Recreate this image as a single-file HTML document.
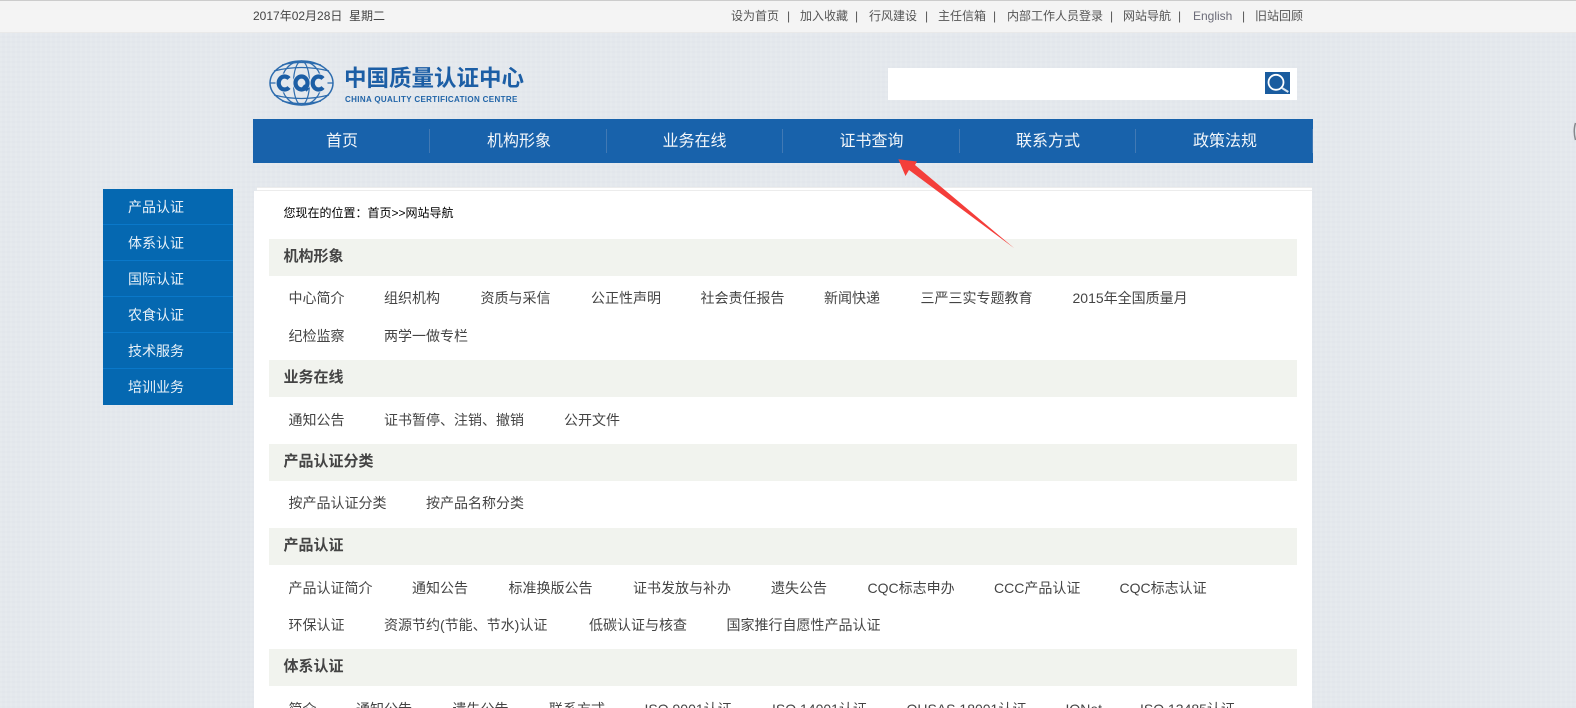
<!DOCTYPE html>
<html lang="zh">
<head>
<meta charset="utf-8">
<style>
html,body{margin:0;padding:0;width:1576px;height:708px;overflow:hidden}
body{position:relative;background:#e4e8ed;font-family:"Liberation Sans","WenQuanYi Zen Hei","Noto Sans CJK SC",sans-serif;color:#444}
#w{position:absolute;left:0;top:0;width:1576px;height:708px;overflow:hidden}
.a{position:absolute;white-space:nowrap}
.tex{position:absolute;left:0;top:0;width:1576px;height:708px;background-image:repeating-linear-gradient(90deg,rgba(255,255,255,.08) 0 2px,rgba(255,255,255,0) 2px 5px),repeating-linear-gradient(0deg,rgba(200,206,214,.07) 0 2px,rgba(255,255,255,0) 2px 5px)}
.top{left:0;top:0;width:1576px;height:31px;background:#f4f4f4;border-top:1px solid #ccc;border-bottom:1px solid #e9e9e9;box-sizing:content-box}
.t{font-size:12px;line-height:14px;top:9px;color:#555}
.nav{left:253px;top:119px;width:1060px;height:44px;background:#1862ab}
.n{top:120px;height:44px;line-height:44px;font-size:16px;color:#f2f6fa;text-align:center;width:120px}
.sep{top:129px;width:1px;height:24px;background:#4179b4}
.side{left:103px;top:189px;width:130px;height:216px;background:#0568b1}
.s{left:128px;font-size:14px;line-height:20px;color:#e8f1f8}
.l{left:103px;width:130px;height:1px;background:#0a78c9}
.bar{left:269px;width:1028px;background:#f1f3ee}
.h{left:283.500px;font-size:15px;line-height:18px;font-weight:bold;color:#444}
.i{font-size:14px;line-height:18px;color:#444}
</style>
</head>
<body>
<div id="w">
<div class="tex"></div>
<div class="a top"></div>
<div class="a t" style="left:253px;color:#444">2017年02月28日&nbsp; 星期二</div>
<div class="a t" style="left:731px">设为首页</div><div class="a t" style="left:787px">|</div>
<div class="a t" style="left:800px">加入收藏</div><div class="a t" style="left:855px">|</div>
<div class="a t" style="left:869px">行风建设</div><div class="a t" style="left:925px">|</div>
<div class="a t" style="left:938px">主任信箱</div><div class="a t" style="left:993px">|</div>
<div class="a t" style="left:1007px">内部工作人员登录</div><div class="a t" style="left:1110px">|</div>
<div class="a t" style="left:1123px">网站导航</div><div class="a t" style="left:1178px">|</div>
<div class="a t" style="left:1193px;color:#6b6b78">English</div><div class="a t" style="left:1242px">|</div>
<div class="a t" style="left:1255px">旧站回顾</div>

<svg class="a" style="left:268px;top:59px" width="68" height="48" viewBox="0 0 68 48" fill="none" stroke="#2d6cae" stroke-width="1.200">
<ellipse cx="33.500" cy="24" rx="31.500" ry="22" stroke-width="1.500"/>
<ellipse cx="33.500" cy="24" rx="20" ry="22"/>
<ellipse cx="33.500" cy="24" rx="8" ry="22"/>
<path d="M6 12Q33.500 5 61 12M2 24H65M6 36Q33.500 43 61 36M14 6Q33.500 1 53 6M14 42Q33.500 47 53 42"/>
<g stroke="#1c5ea5" stroke-width="4.200">
<ellipse cx="16.500" cy="24" rx="9" ry="9.500" stroke="none" fill="#e4e8ed"/>
<ellipse cx="33.500" cy="24" rx="9" ry="9.500" stroke="none" fill="#e4e8ed"/>
<ellipse cx="50.500" cy="24" rx="9" ry="9.500" stroke="none" fill="#e4e8ed"/>
<path d="M21 19.500A6 6.500 0 1 0 21 28.500"/>
<ellipse cx="33.500" cy="24" rx="6" ry="6.500"/>
<path d="M35 27L40 31"/>
<path d="M55 19.500A6 6.500 0 1 0 55 28.500"/>
</g>
</svg>
<div class="a" style="left:344px;top:66px;font-size:22.500px;line-height:26px;font-weight:bold;color:#1c5ea5">中国质量认证中心</div>
<div class="a" style="left:345px;top:95px;font-size:8px;line-height:10px;font-weight:bold;color:#2265a8;letter-spacing:.350px">CHINA QUALITY CERTIFICATION CENTRE</div>

<div class="a" style="left:888px;top:68px;width:409px;height:32px;background:#fff"></div>
<svg class="a" style="left:1265px;top:72px" width="25" height="22" viewBox="0 0 25 22">
<rect width="25" height="22" fill="#1a5c9f"/>
<circle cx="11" cy="10.300" r="7.500" fill="none" stroke="#fff" stroke-width="1.800"/>
<path d="M17 16L23.300 20" stroke="#d8e6f2" stroke-width="2.200"/>
</svg>

<div class="a nav"></div>
<div class="a n" style="left:282px">首页</div>
<div class="a n" style="left:459px">机构形象</div>
<div class="a n" style="left:634.500px">业务在线</div>
<div class="a n" style="left:811.500px">证书查询</div>
<div class="a n" style="left:988px">联系方式</div>
<div class="a n" style="left:1165px">政策法规</div>
<div class="a sep" style="left:429px"></div>
<div class="a sep" style="left:606px"></div>
<div class="a sep" style="left:782px"></div>
<div class="a sep" style="left:959px"></div>
<div class="a sep" style="left:1135px"></div>
<div class="a sep" style="left:1312px"></div>

<div class="a side"></div>
<div class="a s" style="top:197px">产品认证</div>
<div class="a l" style="top:224px"></div>
<div class="a s" style="top:233px">体系认证</div>
<div class="a l" style="top:260px"></div>
<div class="a s" style="top:269px">国际认证</div>
<div class="a l" style="top:296px"></div>
<div class="a s" style="top:305px">农食认证</div>
<div class="a l" style="top:332px"></div>
<div class="a s" style="top:341px">技术服务</div>
<div class="a l" style="top:368px"></div>
<div class="a s" style="top:377px">培训业务</div>

<div class="a" style="left:257px;top:187px;width:1055px;height:4px;background:#fff;border-top:1px solid #ececec;border-bottom:1px solid #ececec;box-sizing:border-box"></div>
<div class="a" style="left:254px;top:191px;width:1058px;height:517px;background:#fff"></div>

<div class="a" style="left:283.500px;top:205px;font-size:12px;line-height:16px;color:#000">您现在的位置：首页&gt;&gt;网站导航</div>

<div class="a bar" style="top:239px;height:37px"></div>
<div class="a h" style="top:248px">机构形象</div>
<div class="a i" style="left:288.500px;top:289px">中心简介</div>
<div class="a i" style="left:384px;top:289px">组织机构</div>
<div class="a i" style="left:480.500px;top:289px">资质与采信</div>
<div class="a i" style="left:591px;top:289px">公正性声明</div>
<div class="a i" style="left:700.500px;top:289px">社会责任报告</div>
<div class="a i" style="left:824px;top:289px">新闻快递</div>
<div class="a i" style="left:920.500px;top:289px">三严三实专题教育</div>
<div class="a i" style="left:1072.500px;top:289px">2015年全国质量月</div>
<div class="a i" style="left:288.500px;top:327px">纪检监察</div>
<div class="a i" style="left:384px;top:327px">两学一做专栏</div>

<div class="a bar" style="top:360px;height:37px"></div>
<div class="a h" style="top:369px">业务在线</div>
<div class="a i" style="left:288.500px;top:411px">通知公告</div>
<div class="a i" style="left:384px;top:411px">证书暂停、注销、撤销</div>
<div class="a i" style="left:564px;top:411px">公开文件</div>

<div class="a bar" style="top:444px;height:37px"></div>
<div class="a h" style="top:453px">产品认证分类</div>
<div class="a i" style="left:288.500px;top:494px">按产品认证分类</div>
<div class="a i" style="left:426px;top:494px">按产品名称分类</div>

<div class="a bar" style="top:528px;height:37px"></div>
<div class="a h" style="top:537px">产品认证</div>
<div class="a i" style="left:288.500px;top:579px">产品认证简介</div>
<div class="a i" style="left:412px;top:579px">通知公告</div>
<div class="a i" style="left:508.500px;top:579px">标准换版公告</div>
<div class="a i" style="left:633px;top:579px">证书发放与补办</div>
<div class="a i" style="left:771px;top:579px">遗失公告</div>
<div class="a i" style="left:867.500px;top:579px">CQC标志申办</div>
<div class="a i" style="left:994px;top:579px">CCC产品认证</div>
<div class="a i" style="left:1119.500px;top:579px">CQC标志认证</div>
<div class="a i" style="left:288.500px;top:616px">环保认证</div>
<div class="a i" style="left:384px;top:616px">资源节约(节能、节水)认证</div>
<div class="a i" style="left:589px;top:616px">低碳认证与核查</div>
<div class="a i" style="left:726.500px;top:616px">国家推行自愿性产品认证</div>

<div class="a bar" style="top:649px;height:37px"></div>
<div class="a h" style="top:658px">体系认证</div>
<div class="a i" style="left:288.500px;top:700px">简介</div>
<div class="a i" style="left:356px;top:700px">通知公告</div>
<div class="a i" style="left:452.500px;top:700px">遗失公告</div>
<div class="a i" style="left:549px;top:700px">联系方式</div>
<div class="a i" style="left:644.500px;top:700px">ISO 9001认证</div>
<div class="a i" style="left:772px;top:700px">ISO 14001认证</div>
<div class="a i" style="left:906.500px;top:700px">OHSAS 18001认证</div>
<div class="a i" style="left:1065.500px;top:700px">IQNet</div>
<div class="a i" style="left:1140px;top:700px">ISO 13485认证</div>

<svg class="a" style="left:0;top:0" width="1576" height="708" viewBox="0 0 1576 708">
<path d="M898.300 159.300L917 161.500L915 165L1014.300 248.300L909 170L905.500 176Z" fill="#f43e3a"/>
<path d="M1575.500 123Q1573 131 1575.500 140" fill="none" stroke="#85888c" stroke-width="1.500"/>
</svg>
</div>
</body>
</html>
